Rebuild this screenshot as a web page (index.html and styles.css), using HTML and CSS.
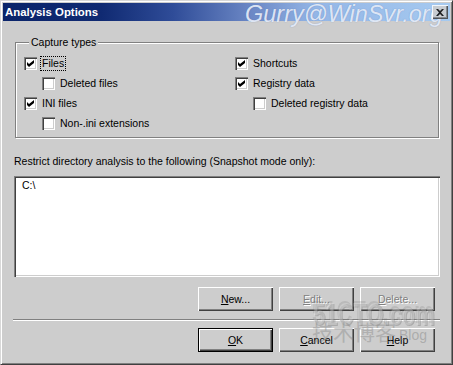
FILE: index.html
```html
<!DOCTYPE html>
<html>
<head>
<meta charset="utf-8">
<link rel="stylesheet" href="styles.css">
</head>
<body>
<div class="window">
  <div class="titlebar">
    <span class="title">Analysis Options</span>
    <span class="wm-title">Gurry@WinSvr.org</span>
    <span class="close">
      <svg width="8" height="7" viewBox="0 0 8 7"><path d="M0 0h2l2 2 2-2h2L5 3.5 8 7H6L4 5 2 7H0l3-3.5z" fill="#000"/></svg>
    </span>
  </div>
  <div class="content">
    <fieldset class="group">
      <legend>Capture types</legend>
      <div class="cols">
        <div class="col">
          <div class="row"><span class="cb on"></span><span class="lbl focus">Files</span></div>
          <div class="row sub"><span class="cb"></span><span class="lbl">Deleted files</span></div>
          <div class="row"><span class="cb on"></span><span class="lbl">INI files</span></div>
          <div class="row sub"><span class="cb"></span><span class="lbl">Non-.ini extensions</span></div>
        </div>
        <div class="col">
          <div class="row"><span class="cb on"></span><span class="lbl">Shortcuts</span></div>
          <div class="row"><span class="cb on"></span><span class="lbl">Registry data</span></div>
          <div class="row sub"><span class="cb"></span><span class="lbl">Deleted registry data</span></div>
        </div>
      </div>
    </fieldset>
    <div class="caption">Restrict directory analysis to the following (Snapshot mode only):</div>
    <div class="listbox"><div class="item">C:\</div></div>
    <div class="btnrow top">
      <button class="btn"><u>N</u>ew...</button>
      <button class="btn disabled"><u>E</u>dit...</button>
      <button class="btn disabled"><u>D</u>elete...</button>
    </div>
    <div class="sep"></div>
    <div class="btnrow bottom">
      <button class="btn default"><u>O</u>K</button>
      <button class="btn"><u>C</u>ancel</button>
      <button class="btn"><u>H</u>elp</button>
    </div>
  </div>
  <div class="wm-51">51CTO.com</div>
  <div class="wm-cn">技术博客</div>
  <div class="wm-blog">Blog</div>
</div>
</body>
</html>
```
FILE: styles.css
```css
* { box-sizing: border-box; }
html, body { margin: 0; padding: 0; background: #cdcdcd; }
body { font-family: "Liberation Sans", Arial, sans-serif; font-size: 10.5px; color: #000; }

.window {
  position: relative;
  width: 453px;
  height: 365px;
  background: #cdcdcd;
  border: 1px solid;
  border-color: #d8d8d8 #404040 #404040 #d8d8d8;
  box-shadow: inset 1px 1px 0 #fff, inset -1px -1px 0 #808080;
  padding: 2px;
  overflow: hidden;
}

.titlebar {
  position: relative;
  height: 18px;
  display: flex;
  align-items: center;
  background: linear-gradient(90deg, #0a246a 0%, #102a72 22%, #2f4c98 38%, #6a86c4 55%, #94b6e6 70%, #a6caf0 100%);
}
.title {
  color: #fff;
  font-weight: bold;
  font-size: 11.4px;
  padding-left: 2px;
  position: relative;
  z-index: 1;
}
.wm-title {
  position: absolute;
  left: 242px;
  top: -3px;
  font-size: 23.5px;
  font-style: italic;
  color: rgba(236, 242, 252, 0.9);
  text-shadow: 0 0 1px rgba(80, 110, 170, 0.6);
  white-space: nowrap;
  line-height: 28px;
}
.close {
  position: relative;
  z-index: 1;
  margin-left: auto;
  margin-right: 2px;
  width: 16px;
  height: 14px;
  background: #cdcdcd;
  box-shadow: inset 1px 1px 0 #fff, inset -1px -1px 0 #404040, inset -2px -2px 0 #808080;
  display: flex;
  align-items: center;
  justify-content: center;
  opacity: 0.85;
}

.content {
  padding: 14px 10px 0 11px;
}

.group {
  margin: 0 1px;
  padding: 5px 8px 3px 8px;
  border: 1px solid #808080;
  box-shadow: inset 1px 1px 0 #fff, 1px 1px 0 #fff;
  min-width: 0;
}
.group legend {
  padding: 0 2px;
  margin-left: 5px;
  line-height: 14px;
  background: #cdcdcd;
}
.cols {
  display: grid;
  grid-template-columns: 211px 1fr;
}
.row {
  height: 20px;
  display: flex;
  align-items: flex-start;
}
.row.sub { padding-left: 18px; }
.cb {
  flex: none;
  margin-top: 3px;
  width: 13px;
  height: 13px;
  background: #fff;
  box-shadow: inset 1px 1px 0 #808080, inset 2px 2px 0 #404040, inset -1px -1px 0 #fff, inset -2px -2px 0 #cdcdcd;
  position: relative;
}
.cb.on::after {
  content: "";
  position: absolute;
  left: 3px;
  top: 3px;
  width: 7px;
  height: 7px;
  background: #000;
  clip-path: polygon(0 28.6%, 28.6% 57.1%, 100% 0, 100% 42.9%, 28.6% 100%, 0 71.4%);
}
.lbl {
  margin-left: 5px;
  line-height: 13px;
  margin-top: 3px;
  white-space: nowrap;
}
.focus {
  outline: 1px dotted #000;
  outline-offset: 0;
  padding: 0 1px;
  margin-left: 4px;
}

.caption {
  margin-top: 17px;
  line-height: 13px;
  white-space: nowrap;
}
.listbox {
  margin-top: 8px;
  height: 101px;
  background: #fff;
  box-shadow: inset 1px 1px 0 #808080, inset 2px 2px 0 #404040, inset -1px -1px 0 #fff, inset -2px -2px 0 #cdcdcd;
  padding: 3px 6px 0 8px;
}
.item { line-height: 13px; }

.btnrow {
  display: flex;
  justify-content: flex-end;
  gap: 6px;
  padding-right: 5px;
}
.btnrow.top { margin-top: 10px; }
.btnrow.bottom { margin-top: 7px; }
.btn {
  width: 75px;
  height: 24px;
  padding: 0;
  margin: 0;
  border: none;
  background: #cdcdcd;
  font-family: "Liberation Sans", Arial, sans-serif;
  font-size: 10.5px;
  color: #000;
  box-shadow: inset 1px 1px 0 #fff, inset -1px -1px 0 #404040, inset -2px -2px 0 #808080;
}
.btn.disabled {
  color: #808080;
  text-shadow: 1px 1px 0 #fff;
}
.btn.default {
  border: 1px solid #000;
  box-shadow: inset 1px 1px 0 #fff, inset -1px -1px 0 #404040, inset -2px -2px 0 #808080;
}
.sep {
  margin-top: 8px;
  margin-left: -1px;
  height: 2px;
  border-top: 1px solid #808080;
  border-bottom: 1px solid #fff;
}

.wm-51, .wm-cn, .wm-blog {
  position: absolute;
  white-space: nowrap;
  pointer-events: none;
}
.wm-51 {
  left: 312px;
  top: 293px;
  font-size: 22px;
  font-weight: bold;
  line-height: 30px;
  transform: scaleY(1.4);
  transform-origin: left top;
  color: rgba(255, 255, 255, 0.25);
  text-shadow: 1px 1px 0 rgba(110, 110, 110, 0.35), -1px -1px 0 rgba(110, 110, 110, 0.2);
}
.wm-cn {
  left: 311px;
  top: 318px;
  font-family: "Noto Sans CJK SC", sans-serif;
  font-size: 21px;
  line-height: 24px;
  color: rgba(130, 130, 130, 0.4);
}
.wm-blog {
  left: 398px;
  top: 326px;
  font-size: 14px;
  line-height: 16px;
  color: rgba(130, 130, 130, 0.45);
}
```
